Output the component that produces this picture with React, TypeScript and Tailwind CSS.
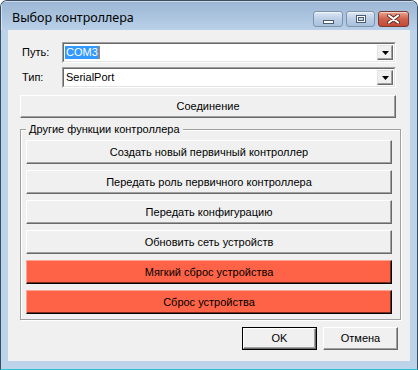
import React from "react";

const btn3d =
  "flex items-center justify-center border border-t-white border-l-white border-r-[#696969] border-b-[#696969] shadow-[inset_-1px_-1px_0_#a0a0a0] bg-[#f0f0f0] text-black";
const btnRed =
  "flex items-center justify-center border border-t-[#ffa492] border-l-[#ffa492] border-r-black border-b-black shadow-[inset_-1px_-1px_0_#7a2a1c] bg-[#ff6347] text-black";

function Combo({ children }: { children: React.ReactNode }) {
  return (
    <div className="w-[334px] h-[21px] border border-t-[#a0a0a0] border-l-[#a0a0a0] border-r-white border-b-white">
      <div className="w-full h-full border border-t-[#696969] border-l-[#696969] border-r-[#e3e3e3] border-b-[#e3e3e3] bg-white flex items-center">
        <div className="flex-1 flex items-center pl-[1px]">{children}</div>
        <div className="w-[16px] h-[15px] mr-[1px] border border-t-[#e3e3e3] border-l-[#e3e3e3] border-r-[#696969] border-b-[#696969] shadow-[inset_-1px_-1px_0_#a0a0a0] bg-[#f0f0f0] flex items-center justify-center">
          <svg width="7" height="4" viewBox="0 0 7 4">
            <path d="M0 0h7L3.5 4z" fill="#000" />
          </svg>
        </div>
      </div>
    </div>
  );
}

function CaptionBtn({ kind }: { kind: "min" | "max" | "close" }) {
  if (kind === "close") {
    return (
      <div className="w-[31px] h-[16px] rounded-[3px] border border-[#7a3a33] bg-gradient-to-b from-[#e8a493] via-[#d0604c] to-[#c44a35] flex items-center justify-center shadow-[inset_0_1px_0_rgba(255,255,255,0.5)]">
        <svg width="13" height="10" viewBox="0 0 13 10">
          <path d="M2 1.5 L11 8.5 M11 1.5 L2 8.5" stroke="#5a2a20" strokeWidth="3.8" strokeLinecap="round" />
          <path d="M2 1.5 L11 8.5 M11 1.5 L2 8.5" stroke="#fff" strokeWidth="2.2" strokeLinecap="round" />
        </svg>
      </div>
    );
  }
  return (
    <div
      className={`${kind === "min" ? "w-[30px]" : "w-[29px]"} h-[16px] rounded-[3px] border border-[#7f93ad] bg-gradient-to-b from-[#dbe7f4] via-[#bccfe6] to-[#aac1dc] flex items-center justify-center shadow-[inset_0_1px_0_rgba(255,255,255,0.6)]`}
    >
      {kind === "min" ? (
        <div className="w-[11px] h-[4px] mt-[5px] bg-white border border-[#4a5a70]" />
      ) : (
        <div className="w-[10px] h-[8px] border border-[#4a5a70] bg-white flex items-center justify-center">
          <div className="w-[6px] h-[4px] border border-[#4a5a70] bg-[#c9d7e8]" />
        </div>
      )}
    </div>
  );
}

export default function App() {
  const font = { fontFamily: '"Liberation Sans", Arial, sans-serif' };
  return (
    <div className="w-[418px] h-[370px] bg-white">
      <div className="w-[418px] h-[370px] rounded-t-[7px] border border-[#3d4e63] border-b-[#2ec4d8] bg-[#bcd3ea] flex flex-col overflow-hidden">
        <div className="h-[29px] flex items-start justify-between bg-gradient-to-b from-[#9bb6d4] to-[#b9d0e8] shadow-[inset_1px_1px_0_rgba(255,255,255,0.5)]">
          <div
            className="pl-[11px] pt-[9px] text-[12.5px] leading-[16px] text-black"
            style={{ fontFamily: '"Noto Sans", "Open Sans", sans-serif' }}
          >
            Выбор контроллера
          </div>
          <div className="flex gap-[3px] pt-[10px] pr-[8px]">
            <CaptionBtn kind="min" />
            <CaptionBtn kind="max" />
            <CaptionBtn kind="close" />
          </div>
        </div>
        <div className="mx-[7px] w-[402px] h-[331px] bg-[#f0f0f0] flex flex-col text-[11px] leading-[13px] text-black" style={font}>
          <div className="flex items-center mt-[12px] pl-[14px]">
            <span className="w-[40px]">Путь:</span>
            <Combo>
              <span className="bg-[#3399ff] text-white px-[1px] leading-[13px]">COM3</span>
              <span className="w-[1px] h-[13px] bg-[#e07a1f]" />
            </Combo>
          </div>
          <div className="flex items-center mt-[4px] pl-[14px]">
            <span className="w-[40px]">Тип:</span>
            <Combo>
              <span className="pl-[1px]">SerialPort</span>
            </Combo>
          </div>
          <div className={`${btn3d} ml-[12px] mt-[7px] w-[376px] h-[23px]`}>Соединение</div>

          <div className="relative ml-[12px] mt-[11px] w-[381px] h-[191px] border border-[#a0a0a0] shadow-[inset_1px_1px_0_#fff,1px_1px_0_#fff] flex flex-col pt-[10px] pl-[5px] gap-[6px]">
            <span className="absolute left-[5px] top-[-7px] bg-[#f0f0f0] px-[3px]">Другие функции контроллера</span>
            <div className={`${btn3d} w-[366px] h-[24px]`}>Создать новый первичный контроллер</div>
            <div className={`${btn3d} w-[366px] h-[24px]`}>Передать роль первичного контроллера</div>
            <div className={`${btn3d} w-[366px] h-[24px]`}>Передать конфигурацию</div>
            <div className={`${btn3d} w-[366px] h-[24px]`}>Обновить сеть устройств</div>
            <div className={`${btnRed} w-[366px] h-[24px]`}>Мягкий сброс устройства</div>
            <div className={`${btnRed} w-[366px] h-[24px]`}>Сброс устройства</div>
          </div>

          <div className="flex gap-[6px] ml-[234px] mt-[7px]">
            <div className="w-[75px] h-[23px] border border-black">
              <div className={`${btn3d} w-full h-full`}>OK</div>
            </div>
            <div className={`${btn3d} w-[75px] h-[23px]`}>Отмена</div>
          </div>
        </div>
      </div>
    </div>
  );
}
